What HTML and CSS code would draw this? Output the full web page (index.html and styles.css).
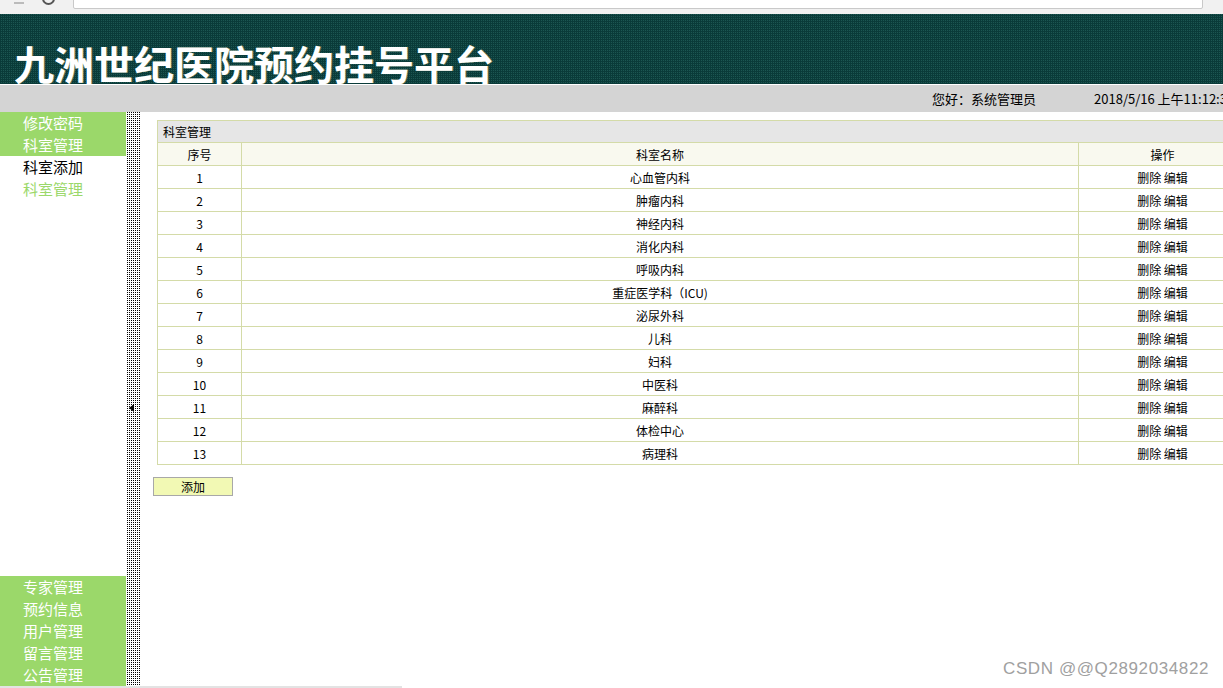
FILE: index.html
```html
<!DOCTYPE html>
<html lang="zh-CN">
<head>
    <meta charset="UTF-8">
    <title>九洲世纪医院预约挂号平台</title>
    <link rel="stylesheet" href="styles.css">
</head>
<body>
    <div class="chrome">
        <span class="nav-btn"></span>
        <span class="nav-btn round"></span>
        <div class="address"></div>
    </div>

    <div class="header">
        <h1>九洲世纪医院预约挂号平台</h1>
    </div>

    <div class="topbar">
        <span class="greet">您好：系统管理员</span>
        <span class="clock">2018/5/16 上午11:12:35</span>
    </div>

    <div class="main">
        <div class="sidebar">
            <ul class="menu">
                <li class="menu-title">修改密码</li>
                <li class="menu-title">科室管理</li>
                <li class="menu-sub">科室添加</li>
                <li class="menu-sub active">科室管理</li>
            </ul>
            <ul class="menu">
                <li class="menu-title">专家管理</li>
                <li class="menu-title">预约信息</li>
                <li class="menu-title">用户管理</li>
                <li class="menu-title">留言管理</li>
                <li class="menu-title">公告管理</li>
            </ul>
        </div>

        <div class="splitter">
            <span class="arrow"></span>
        </div>

        <div class="content">
            <table class="grid">
                <colgroup>
                    <col class="col-no">
                    <col class="col-name">
                    <col class="col-op">
                </colgroup>
                <tr>
                    <td class="grid-title" colspan="3">科室管理</td>
                </tr>
                <tr class="grid-head">
                    <td>序号</td>
                    <td>科室名称</td>
                    <td>操作</td>
                </tr>
                <tr><td>1</td><td>心血管内科</td><td>删除 编辑</td></tr>
                <tr><td>2</td><td>肿瘤内科</td><td>删除 编辑</td></tr>
                <tr><td>3</td><td>神经内科</td><td>删除 编辑</td></tr>
                <tr><td>4</td><td>消化内科</td><td>删除 编辑</td></tr>
                <tr><td>5</td><td>呼吸内科</td><td>删除 编辑</td></tr>
                <tr><td>6</td><td>重症医学科（ICU)</td><td>删除 编辑</td></tr>
                <tr><td>7</td><td>泌尿外科</td><td>删除 编辑</td></tr>
                <tr><td>8</td><td>儿科</td><td>删除 编辑</td></tr>
                <tr><td>9</td><td>妇科</td><td>删除 编辑</td></tr>
                <tr><td>10</td><td>中医科</td><td>删除 编辑</td></tr>
                <tr><td>11</td><td>麻醉科</td><td>删除 编辑</td></tr>
                <tr><td>12</td><td>体检中心</td><td>删除 编辑</td></tr>
                <tr><td>13</td><td>病理科</td><td>删除 编辑</td></tr>
            </table>
            <button class="btn-add">添加</button>
        </div>
    </div>

    <div class="hscroll"></div>

    <div class="watermark">CSDN @@Q2892034822</div>
</body>
</html>
```

FILE: styles.css
```css
body {
    margin: 0;
    width: 1223px;
    height: 688px;
    overflow: hidden;
    position: relative;
    background: #fff;
    font-family: "Noto Sans CJK SC", "Microsoft YaHei", sans-serif;
    color: #000;
}

/* browser strip at the very top */
.chrome {
    height: 14px;
    background: #f1f1f1;
    display: flex;
    align-items: flex-end;
    overflow: hidden;
}

.nav-btn {
    width: 10px;
    height: 6px;
    margin-left: 14px;
    margin-bottom: 10px;
    border-bottom: 2px solid #bbb;
}

.nav-btn.round {
    width: 9px;
    height: 9px;
    margin-left: 18px;
    margin-bottom: 9px;
    border: 2px solid #555;
    border-radius: 50%;
}

.address {
    width: 1128px;
    height: 20px;
    margin-left: 18px;
    margin-bottom: 5px;
    background: #fff;
    border: 1px solid #c9c9c9;
    border-radius: 2px;
}

/* title banner */
.header {
    height: 70px;
    background-color: #0a3b39;
    background-image: conic-gradient(#1c5651 0 25%, transparent 0 100%);
    background-size: 2px 2px;
    display: flex;
    align-items: flex-end;
}

.header h1 {
    margin: 0 0 0 14px;
    font-size: 40px;
    line-height: 42px;
    font-weight: bold;
    color: #fff;
    text-shadow: 1px 0 0 rgba(255, 220, 120, 0.35);
}

.topbar {
    height: 27px;
    margin-top: 1px;
    background: #d4d4d4;
    display: flex;
    align-items: center;
    font-size: 13px;
    white-space: nowrap;
    overflow: hidden;
}

.greet {
    margin-left: 932px;
}

.clock {
    margin-left: 58px;
}

/* body area */
.main {
    display: flex;
    height: 574px;
}

.sidebar {
    width: 126px;
    display: flex;
    flex-direction: column;
    justify-content: space-between;
}

.menu {
    list-style: none;
    margin: 0;
    padding: 0;
}

.menu li {
    height: 22px;
    line-height: 21px;
    padding-left: 23px;
    font-size: 15px;
}

.menu-title {
    background: #9bd86a;
    color: #fff;
}

.menu-sub {
    color: #000;
}

.menu-sub:first-of-type {
    margin-top: 1px;
}

.menu-sub.active {
    color: #9bd86a;
}

.splitter {
    width: 14px;
    background-image: conic-gradient(#000 0 25%, #fff 0 100%);
    background-size: 2px 2px;
    display: flex;
    flex-direction: column;
    justify-content: center;
}

.arrow {
    width: 0;
    height: 0;
    margin: 18px 0 0 3px;
    border-top: 4px solid transparent;
    border-bottom: 4px solid transparent;
    border-right: 5px solid #000;
}

.content {
    flex: 1;
    padding: 8px 0 0 17px;
    overflow: hidden;
}

.grid {
    width: 1090px;
    border-collapse: collapse;
    border: 1px solid #d4dba8;
    font-size: 12px;
    table-layout: fixed;
}

.col-no {
    width: 84px;
}

.col-name {
    width: 837px;
}

.grid td {
    height: 22px;
    padding: 0;
    border: 1px solid #d4dba8;
    text-align: center;
    line-height: 21px;
    white-space: nowrap;
}

.grid td.grid-title {
    background: #e6e6e6;
    text-align: left;
    padding-left: 5px;
    height: 21px;
}

.grid-head td {
    background: #f9f9ef;
}

.btn-add {
    display: block;
    margin: 12px 0 0 -4px;
    width: 80px;
    height: 19px;
    padding: 0;
    background: #f2f9b4;
    border: 1px solid #a8a8a8;
    font-family: inherit;
    font-size: 12px;
    line-height: 17px;
    color: #000;
}

.hscroll {
    width: 402px;
    height: 2px;
    background: #e3e3e3;
}

.watermark {
    position: absolute;
    right: 14px;
    bottom: 9px;
    font-family: "Liberation Sans", Arial, sans-serif;
    font-size: 17px;
    color: #a0a0a0;
    letter-spacing: 0.6px;
}
```
